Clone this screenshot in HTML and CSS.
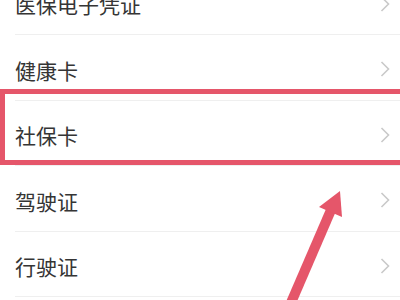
FILE: index.html
```html
<!DOCTYPE html>
<html lang="zh">
<head>
<meta charset="utf-8">
<link rel="stylesheet" href="styles.css">
</head>
<body>
<div class="screen">
  <ul class="list">
    <li class="row"><span class="label">医保电子凭证</span><svg class="chev" viewBox="0 0 10 16"><polyline points="1.5,1 8.5,8 1.5,15"/></svg></li>
    <li class="row"><span class="label">健康卡</span><svg class="chev" viewBox="0 0 10 16"><polyline points="1.5,1 8.5,8 1.5,15"/></svg></li>
    <li class="row"><span class="label">社保卡</span><svg class="chev" viewBox="0 0 10 16"><polyline points="1.5,1 8.5,8 1.5,15"/></svg></li>
    <li class="row"><span class="label">驾驶证</span><svg class="chev" viewBox="0 0 10 16"><polyline points="1.5,1 8.5,8 1.5,15"/></svg></li>
    <li class="row"><span class="label">行驶证</span><svg class="chev" viewBox="0 0 10 16"><polyline points="1.5,1 8.5,8 1.5,15"/></svg></li>
  </ul>
  <div class="highlight"></div>
  <svg class="arrow" viewBox="0 0 400 300">
    <line x1="331" y1="210" x2="287" y2="312"/>
    <polygon points="340,191 342,217 319,207"/>
  </svg>
</div>
</body>
</html>
```
FILE: styles.css
```css
html, body {
  margin: 0;
  padding: 0;
  background: #ffffff;
}
.screen {
  position: relative;
  width: 400px;
  height: 300px;
  overflow: hidden;
  background: #ffffff;
  font-family: "Noto Sans CJK SC", "Noto Sans", sans-serif;
}
.list {
  list-style: none;
  margin: -30.5px 0 0 0;
  padding: 0;
}
.row {
  height: 65.5px;
  box-sizing: border-box;
  margin-left: 15px;
  padding-right: 10px;
  border-bottom: 1px solid #efefef;
  display: flex;
  align-items: center;
  justify-content: space-between;
}
.label {
  font-size: 21px;
  color: #353535;
  line-height: 1;
  padding-top: 6px;
}
.chev {
  width: 10px;
  height: 16px;
  fill: none;
  stroke: #c9c9c9;
  stroke-width: 1.6;
  margin-top: 4px;
}
.highlight {
  position: absolute;
  left: 0;
  top: 89px;
  width: 412px;
  height: 76px;
  box-sizing: border-box;
  border: 5px solid #e5566a;
}
.arrow {
  position: absolute;
  left: 0;
  top: 0;
  width: 400px;
  height: 300px;
}
.arrow line {
  stroke: #e5566a;
  stroke-width: 10;
}
.arrow polygon {
  fill: #e5566a;
}
```
